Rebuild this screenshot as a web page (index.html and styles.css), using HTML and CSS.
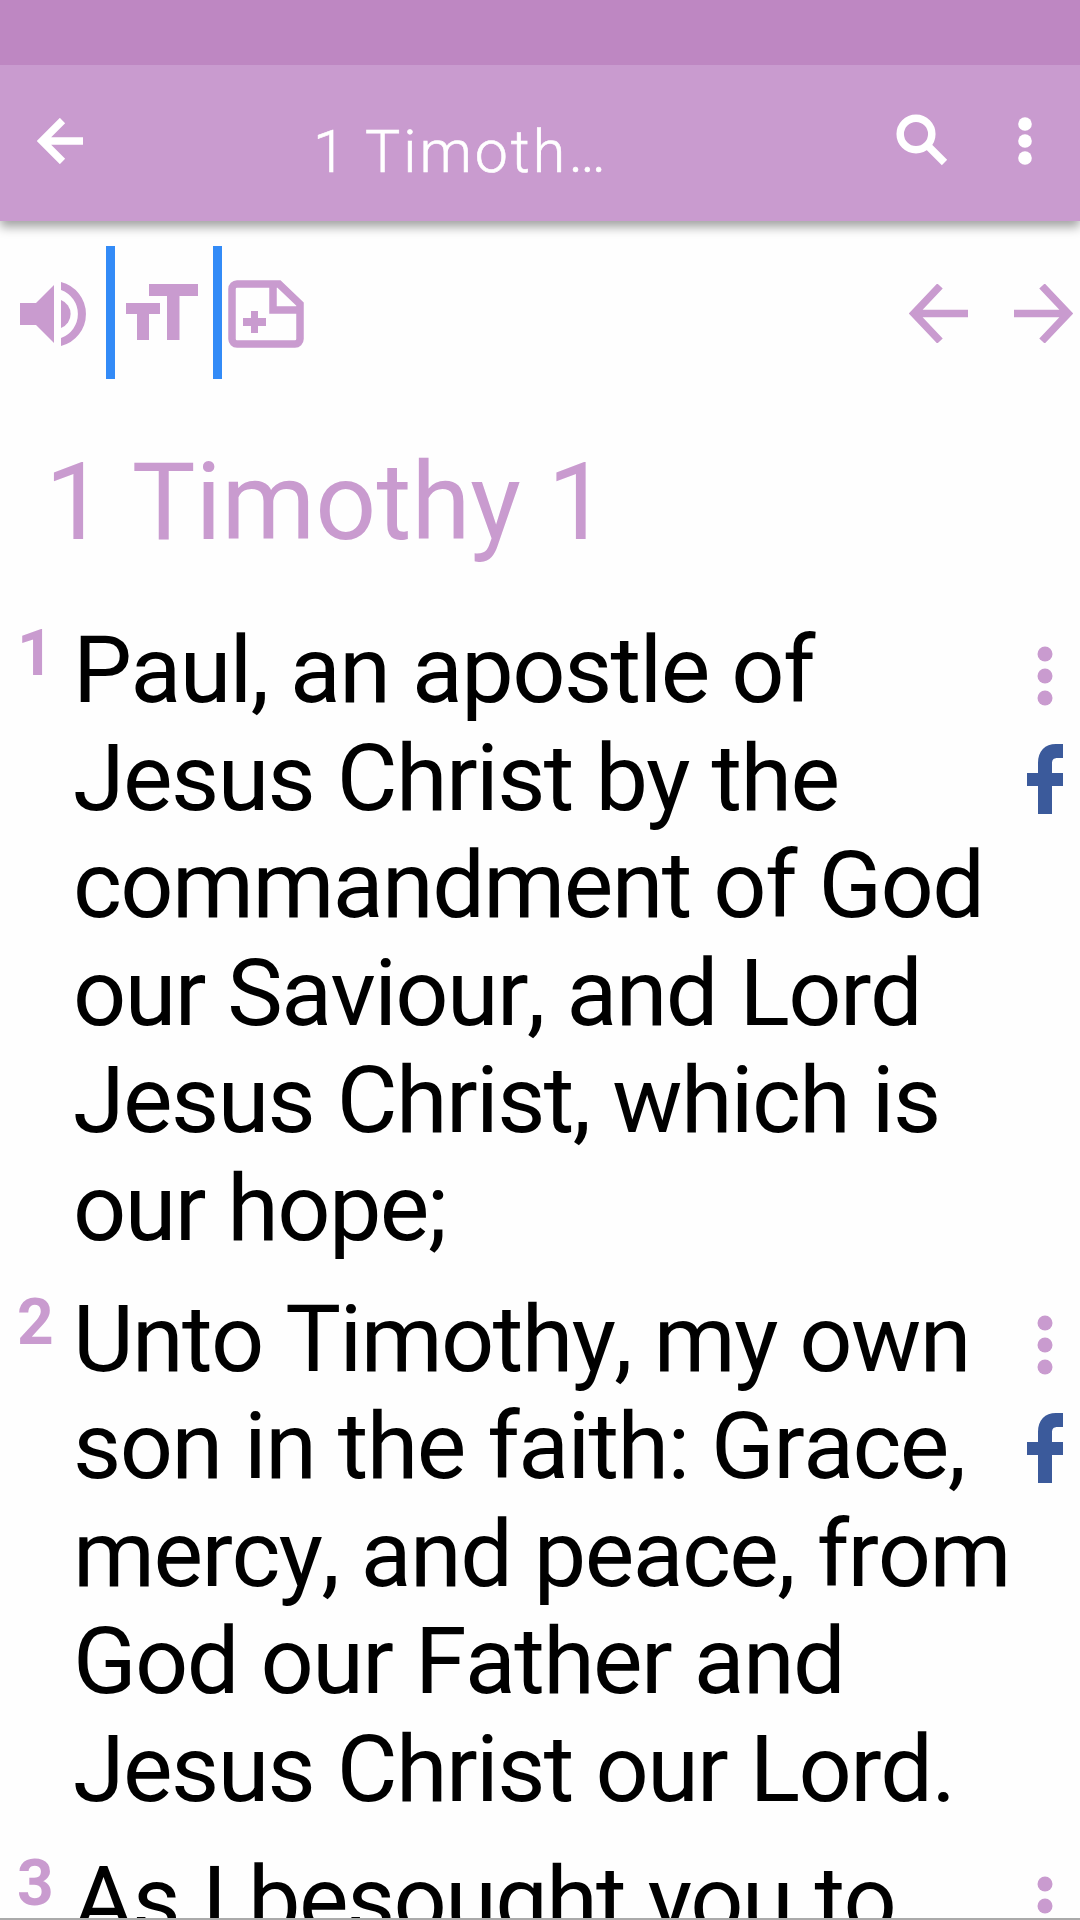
FILE: index.html
```html
<!DOCTYPE html>
<html lang="en">

<head>
    <meta charset="UTF-8">
    <meta name="viewport" content="width=device-width, initial-scale=1.0">
    <title>1 Timothy 1</title>
    <link rel="stylesheet" href="styles.css">
</head>

<body>
    <div class="status-bar"></div>
    <header class="app-bar">
        <svg class="back" width="46" height="46" viewBox="0 0 46 46">
            <path d="M25.500 2.500L5 23l20.500 20.500M5 23h41" />
        </svg>
        <div class="title">1 Timoth…</div>
        <svg class="search" width="52" height="52" viewBox="0 0 52 52">
            <circle cx="20" cy="20" r="15.800" />
            <path d="M31 31l17.500 17.500" />
        </svg>
        <svg class="menu" width="14" height="48" viewBox="0 0 14 48">
            <circle cx="7" cy="7" r="6.800" />
            <circle cx="7" cy="24" r="6.800" />
            <circle cx="7" cy="41" r="6.800" />
        </svg>
    </header>

    <main>
        <div class="tools">
            <svg class="sound" width="69" height="66" viewBox="0 0 69 66">
                <path d="M0 22h16L34 4v58L16 44H0z" />
                <path d="M41 19a15 15 0 0 1 0 28z" />
                <path d="M41 1a33 33 0 0 1 0 64v-8a25.500 25.500 0 0 0 0-48z" />
            </svg>
            <div class="divider"></div>
            <svg class="text-size" width="72" height="56" viewBox="0 0 72 56">
                <path d="M23 0h49v12H53.500v44H41V12H23z" />
                <path d="M0 19h34v11H23v26H11V30H0z" />
            </svg>
            <div class="divider"></div>
            <svg class="add-note" width="76" height="68" viewBox="0 0 76 68">
                <path class="line" d="M9 4h42l21 20v35a5 5 0 0 1-5 5H9a5 5 0 0 1-5-5V9a5 5 0 0 1 5-5z" />
                <path class="line" d="M45 4v26h27" />
                <path d="M23 31h7v7h8v8h-8v7h-7v-7h-8v-8h8z" />
            </svg>
            <svg class="prev" width="59" height="59" viewBox="0 0 59 59">
                <path d="M31 2L5 29.500 31 57M5 29.500h54" />
            </svg>
            <svg class="next" width="59" height="59" viewBox="0 0 59 59">
                <path d="M28 2l26 27.500L28 57M54 29.500H0" />
            </svg>
        </div>

        <h1>1 Timothy 1</h1>

        <div class="verse">
            <span class="number">1</span>
            <p>Paul, an apostle of<br>Jesus Christ by the<br>commandment of God<br>our Saviour, and Lord<br>Jesus Christ, which is<br>our hope;</p>
            <div class="actions">
                <svg class="dots" width="16" height="60" viewBox="0 0 16 60">
                    <circle cx="8" cy="8" r="7.500" />
                    <circle cx="8" cy="30" r="7.500" />
                    <circle cx="8" cy="52" r="7.500" />
                </svg>
                <svg class="facebook" width="36" height="70" viewBox="0 0 36 70">
                    <path d="M11 70V42H0V29h11V19C11 7 18 0 29 0h7v14h-5c-5 0-6 2-6 6v9h11v13H25v28z" />
                </svg>
            </div>
        </div>

        <div class="verse">
            <span class="number">2</span>
            <p>Unto Timothy, my own<br>son in the faith: Grace,<br>mercy, and peace, from<br>God our Father and<br>Jesus Christ our Lord.</p>
            <div class="actions">
                <svg class="dots" width="16" height="60" viewBox="0 0 16 60">
                    <circle cx="8" cy="8" r="7.500" />
                    <circle cx="8" cy="30" r="7.500" />
                    <circle cx="8" cy="52" r="7.500" />
                </svg>
                <svg class="facebook" width="36" height="70" viewBox="0 0 36 70">
                    <path d="M11 70V42H0V29h11V19C11 7 18 0 29 0h7v14h-5c-5 0-6 2-6 6v9h11v13H25v28z" />
                </svg>
            </div>
        </div>

        <div class="verse">
            <span class="number">3</span>
            <p>As I besought you to</p>
            <div class="actions">
                <svg class="dots" width="16" height="60" viewBox="0 0 16 60">
                    <circle cx="8" cy="8" r="7.500" />
                    <circle cx="8" cy="30" r="7.500" />
                    <circle cx="8" cy="52" r="7.500" />
                </svg>
            </div>
        </div>
    </main>
</body>

</html>
```

FILE: styles.css
```css
* {
    box-sizing: border-box;
}

body {
    margin: 0;
    height: 1920px;
    overflow: hidden;
    display: flex;
    flex-direction: column;
    background-color: #fefefe;
    color: #000;
    font-family: Roboto, sans-serif;
}

svg {
    display: block;
    flex-shrink: 0;
}

.status-bar {
    flex: 0 0 65px;
    background-color: #be87c2;
}

.app-bar {
    flex: 0 0 156px;
    display: flex;
    align-items: flex-start;
    padding: 47px 48px 0 37px;
    background-color: #c99bcf;
    box-shadow: 0 6px 10px rgba(0, 0, 0, 0.36);
    clip-path: inset(0 0 -30px 0);
    z-index: 1;
}

.back,
.search {
    fill: none;
    stroke: #fff;
    stroke-width: 7.5;
}

.back {
    margin-top: 6px;
}

.title {
    flex: 1;
    padding-left: 230px;
    color: #fff;
    font-size: 59px;
    line-height: 80px;
    letter-spacing: 3px;
    font-weight: 300;
    -webkit-text-stroke: 0.6px #fff;
    white-space: nowrap;
}

.search {
    margin: 2px 70px 0 0;
}

.menu {
    margin-top: 5px;
    fill: #fff;
}

main {
    flex: 1;
    overflow: hidden;
    border-bottom: 2px solid #aaa;
}

.tools {
    display: flex;
    align-items: center;
    height: 133px;
    margin-top: 25px;
    padding: 2px 7px 0 20px;
    fill: #c99bcf;
}

.divider {
    width: 9px;
    height: 133px;
    margin: -2px 0 0 17px;
    background-color: #338bf7;
}

.text-size {
    margin: -3px 0 0 11px;
}

.text-size + .divider {
    margin-left: 15px;
}

.add-note {
    margin-left: 6px;
}

.line,
.prev,
.next {
    fill: none;
    stroke: #c99bcf;
    stroke-width: 7.5;
}

.prev {
    margin-left: auto;
}

.next {
    margin-left: 46px;
}

h1 {
    margin: 61px 0 0 45px;
    color: #c99bcf;
    font-size: 107px;
    line-height: 126px;
    font-weight: 400;
    font-kerning: none;
}

.verse {
    display: flex;
    align-items: flex-start;
    padding-right: 17px;
    margin-bottom: 23px;
}

h1 + .verse {
    margin-top: 51px;
}

.number {
    flex: 0 0 73px;
    padding-left: 17px;
    color: #c99bcf;
    font-size: 64px;
    line-height: 74px;
    font-weight: 700;
}

.verse p {
    flex: 1;
    margin: 0;
    font-size: 93.5px;
    line-height: 107.6px;
    letter-spacing: -1.6px;
    word-spacing: 1px;
    font-kerning: none;
    white-space: nowrap;
}

.actions {
    display: flex;
    flex-direction: column;
    align-items: center;
    width: 36px;
    gap: 38px;
    padding-top: 29px;
}

.dots {
    fill: #c99bcf;
}

.facebook {
    fill: #3b5a9b;
}
```
